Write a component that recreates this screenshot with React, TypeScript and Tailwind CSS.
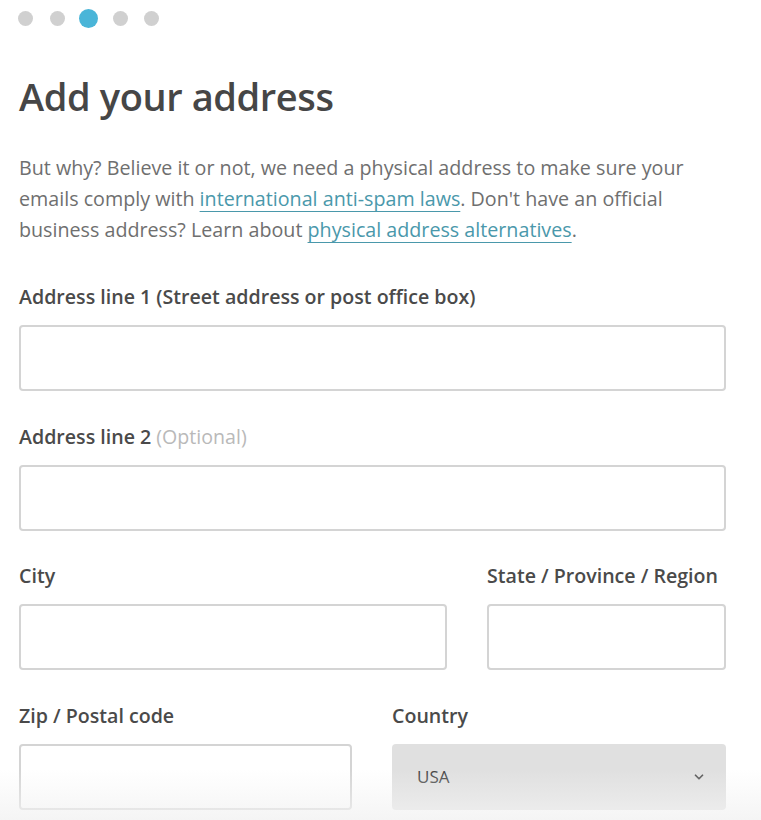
import { ChevronDown } from "lucide-react";

function Field({ label, optional, className }: { label: string; optional?: boolean; className?: string }) {
  return (
    <div className={className}>
      <label className="block text-[19.6px] font-semibold leading-[28px] text-[#4a4a4a]">
        {label}
        {optional && <span className="font-normal text-[#b9b9b9]"> (Optional)</span>}
      </label>
      <input className="mt-[14px] block h-[66px] w-full rounded-[4px] border-2 border-[#d4d4d4] bg-white px-4 outline-none" />
    </div>
  );
}

const dots = [false, false, true, false, false];

export default function App() {
  return (
    <div className="relative h-[820px] overflow-hidden bg-white font-['Open_Sans',sans-serif]">
      <div className="flex h-[19px] items-center pl-[10px] mt-[9px]">
        {dots.map((active, i) => (
          <div key={i} className="flex w-[31.5px] justify-center">
            {active ? (
              <span className="h-[19px] w-[19px] rounded-full bg-[#4ab5d8]" />
            ) : (
              <span className="h-[15px] w-[15px] rounded-full bg-[#d0d0d0]" />
            )}
          </div>
        ))}
      </div>

      <div className="ml-[19px] w-[707px]">
        <h1 className="mt-[40px] text-[38px] font-semibold leading-[56px] tracking-[-0.4px] text-[#464646]">Add your address</h1>
        <p className="mt-[28px] text-[19.7px] leading-[31px] text-[#6f6f6f]">
          But why? Believe it or not, we need a physical address to make sure your emails comply with{" "}
          <a className="text-[#4a98ab] underline decoration-1 underline-offset-[5px]">international anti-spam laws</a>. Don't
          have an official business address? Learn about{" "}
          <a className="text-[#4a98ab] underline decoration-1 underline-offset-[5px]">physical address alternatives</a>.
        </p>

        <div className="mt-[38px] flex flex-col gap-[31.5px]">
          <Field label="Address line 1 (Street address or post office box)" />
          <Field label="Address line 2" optional />
          <div className="flex gap-[40px]">
            <Field label="City" className="w-[428px]" />
            <Field label="State / Province / Region" className="flex-1" />
          </div>
          <div className="flex gap-[40px]">
            <Field label="Zip / Postal code" className="w-[333px]" />
            <div className="flex-1">
              <label className="block text-[19.6px] font-semibold leading-[28px] text-[#4a4a4a]">Country</label>
              <div className="mt-[14px] flex h-[66px] items-center justify-between rounded-[4px] bg-[#e0e0e0] pl-[25px] pr-[20px] text-[17px] text-[#444]">
                <span>USA</span>
                <ChevronDown size={14} strokeWidth={3} className="text-[#555]" />
              </div>
            </div>
          </div>
        </div>
      </div>
      <div className="pointer-events-none absolute inset-x-0 bottom-0 h-[50px] bg-gradient-to-b from-transparent to-[#f2f2f2]/80" />
    </div>
  );
}
